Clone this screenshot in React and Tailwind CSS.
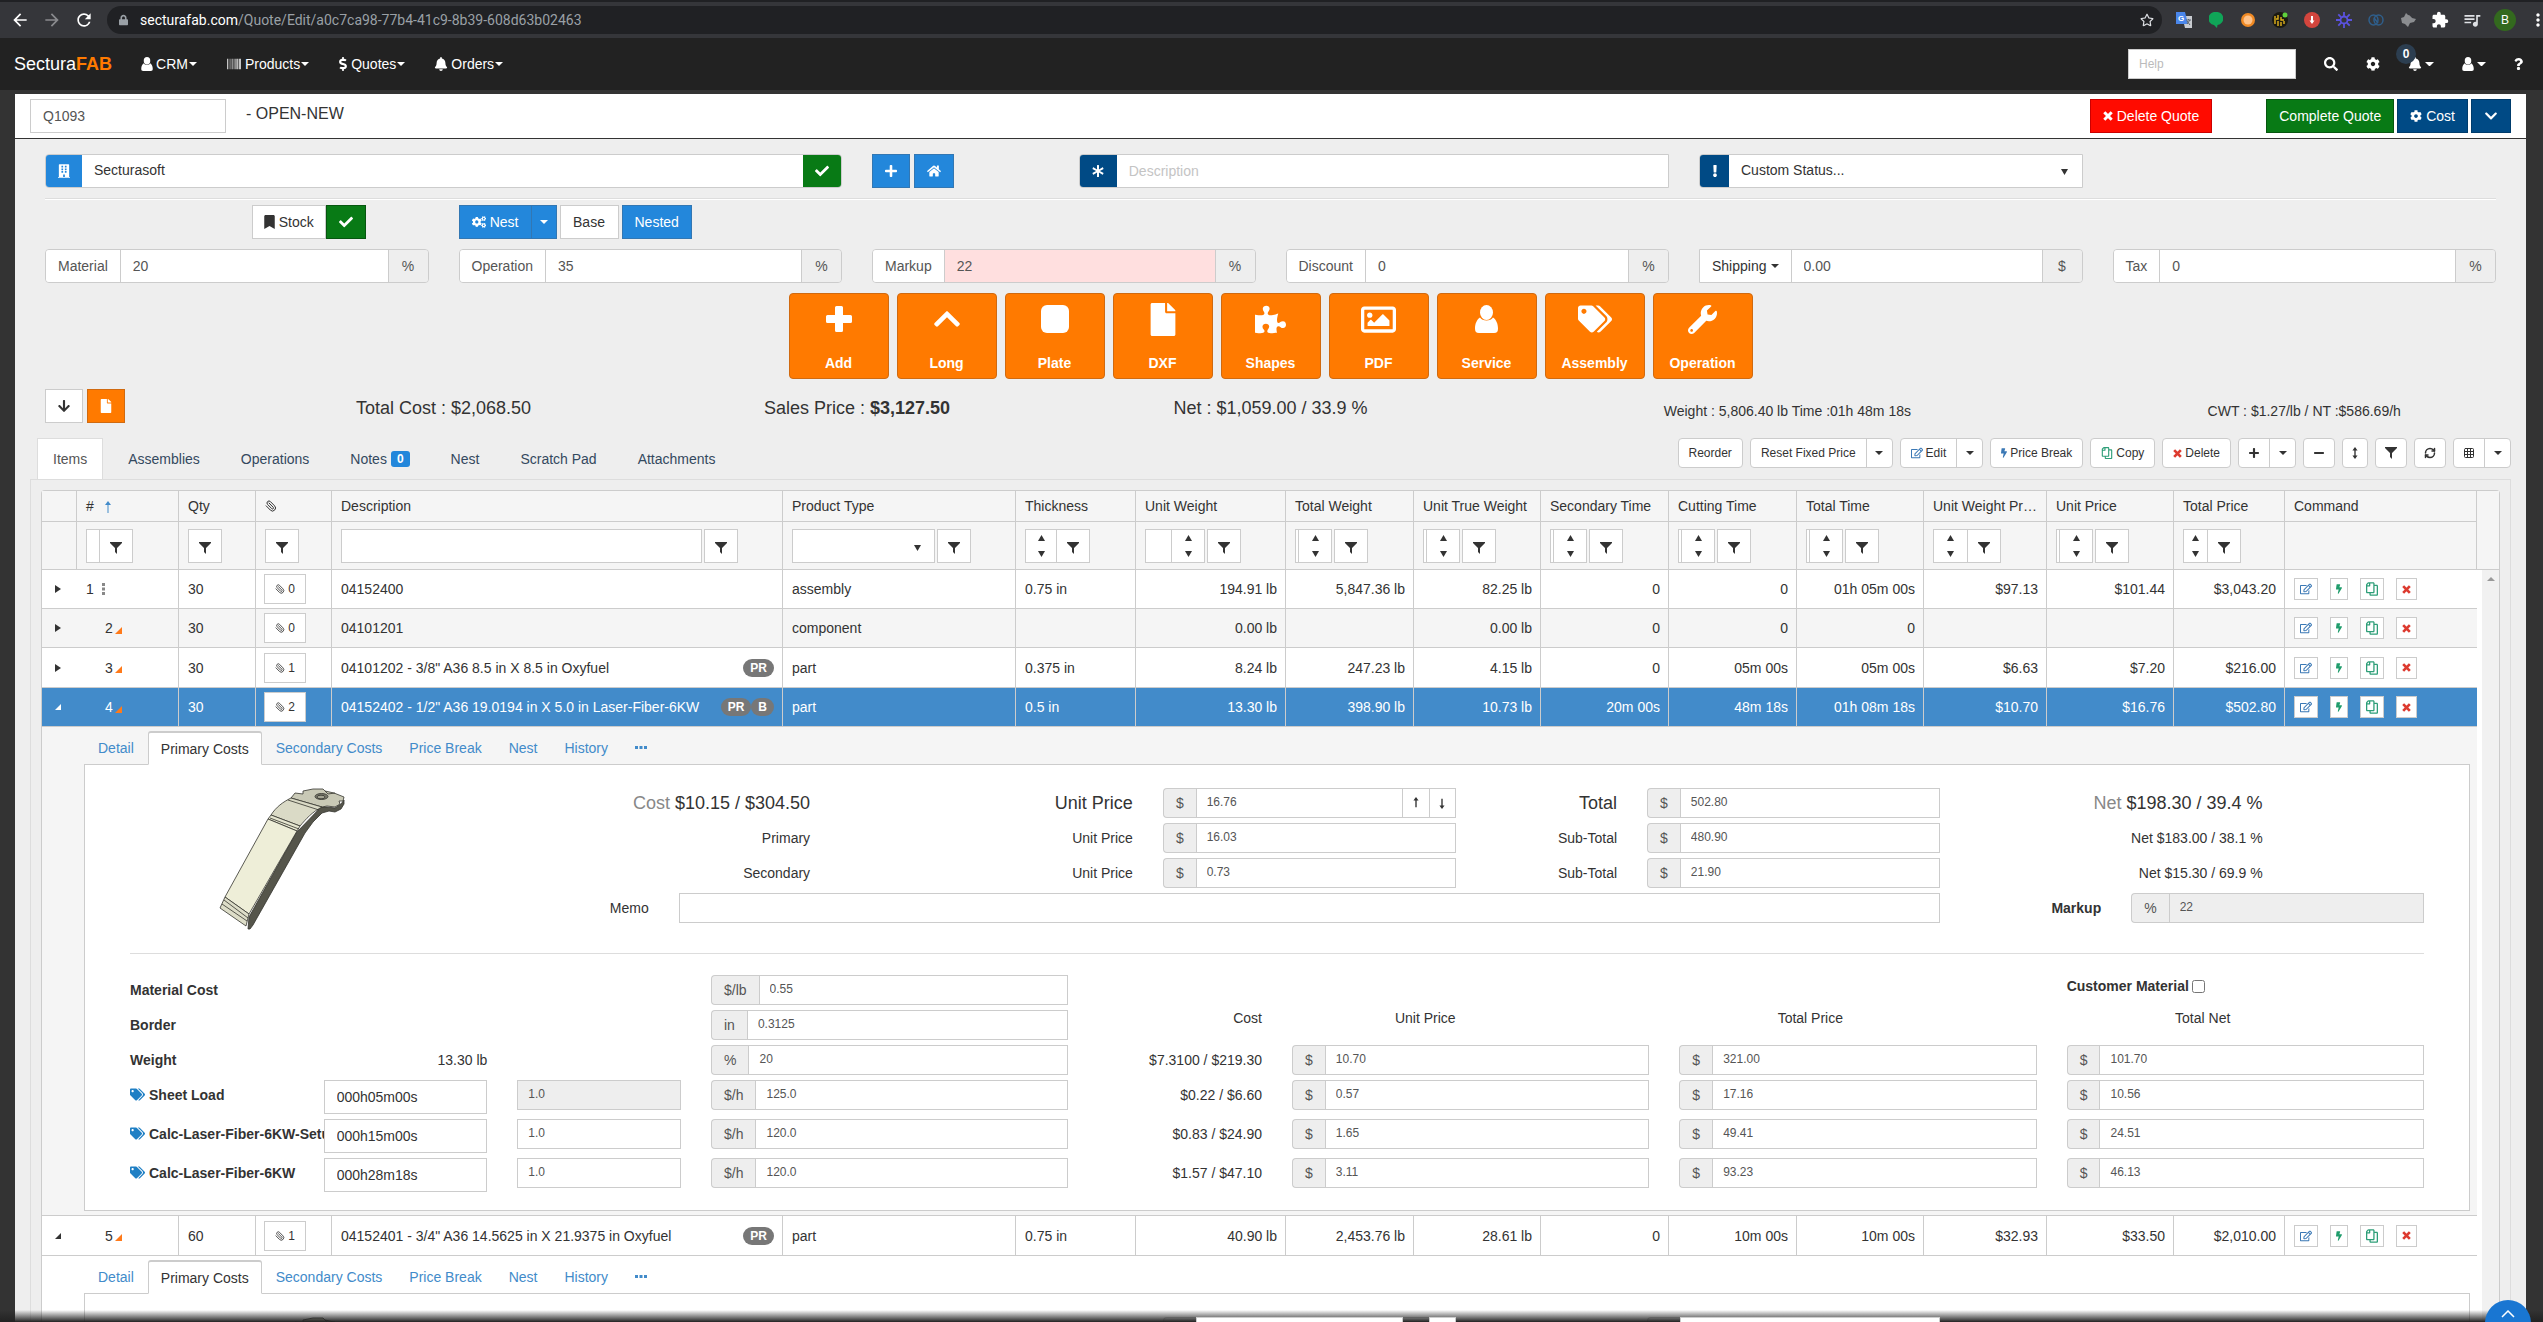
import { useState } from 'react';
import {
  FaArrowDown, FaAsterisk, FaBarcode, FaBell, FaBolt, FaBookmark, FaBuilding, FaCheck, FaChevronDown,
  FaChevronUp, FaCog, FaCogs, FaDollarSign, FaExclamation, FaFile, FaHome, FaLock, FaMinus,
  FaPlus, FaPuzzlePiece, FaQuestion, FaRegCopy, FaRegEdit, FaRegImage, FaRegStar, FaSearch, FaTags,
  FaWrench,
} from 'react-icons/fa';
import { MdArrowBack, MdArrowForward, MdExtension, MdMoreVert, MdQueueMusic, MdRefresh } from 'react-icons/md';
import { Grid3x3, Paperclip, RefreshCw } from 'lucide-react';
import clsx from 'clsx';

/* ---------- small icons ---------- */

function Caret({ className = 'w-2' }) {
  return (
    <svg viewBox="0 0 8 4" className={clsx('inline-block shrink-0', className)} fill="currentColor">
      <path d="M0 0h8L4 4z" />
    </svg>
  );
}

function Arrow({ className }) {
  return (
    <svg viewBox="0 0 7 6" className={clsx('block w-[7px] h-1.5', className)} fill="currentColor">
      <path d="M0 0h7L3.500 6z" />
    </svg>
  );
}

function Cross({ className }) {
  return (
    <svg viewBox="0 0 10 10" className={className} stroke="currentColor" strokeWidth="3">
      <path d="M1.300 1.300l7.400 7.400M8.700 1.300L1.300 8.700" />
    </svg>
  );
}

function Person({ className }) {
  return (
    <svg viewBox="0 0 23 28" className={className} fill="currentColor">
      <ellipse cx="11.500" cy="7.500" rx="6.500" ry="7.500" />
      <path d="M5 12.500c2 4 11 4 13 0 3 2 5 6 5 11 0 3-1 4.500-4 4.500H4c-3 0-4-1.500-4-4.500 0-5 2-9 5-11z" />
    </svg>
  );
}

function Funnel() {
  return (
    <svg viewBox="0 0 12 12" className="w-3 h-3" fill="currentColor">
      <path d="M0 0h12v1L7 6v6L5 10V6L0 1z" />
    </svg>
  );
}

function Vertical({ up, down }) {
  return (
    <svg viewBox="0 0 8 14" className="w-2 h-3" fill="currentColor">
      <path d="M3.200 2h1.600v10H3.200z" />
      {up && <path d="M4 0l3 4H1z" />}
      {down && <path d="M4 14l3-4H1z" />}
    </svg>
  );
}

function PartDrawing() {
  return (
    <svg viewBox="0 3 140 142" className="w-[140px] h-[142px]" stroke="#33332d" strokeWidth="0.8" strokeLinejoin="round">
      <path d="M107 22l6 0 8 1 6-4 3-4v4l-3 5-6 3-6-1-7 2-9 9-8 11-52 92-3 4-2 0 1-12 47-84z" fill="#55554b" />
      <path d="M77 13l4-5 8 1 0-3 10-2 10 0 2 2 9 2 10 4-1 4-4 0 1 3-5 3-8-1-5 1z" fill="#c9c9b6" />
      <path d="M77 13l31 9c-10 5-16 12-22 19L57 30c5-8 12-13 20-17z" fill="#dadac6" />
      <path d="M57 30l29 11-3 5-29-12z" fill="#e6e6d0" />
      <path d="M54 34l29 12-48 83-24-17z" fill="#eeeed8" />
      <path d="M11 112l24 17-3 12L6 123z" fill="#ddddc8" />
      <path d="M74 15l31 10M56 33l29 11M10 115l24 18M8 119l25 17M111 6l3 3 7-1" fill="none" />
      <ellipse cx="107.500" cy="11.500" rx="6.500" ry="3" fill="#77776a" />
      <ellipse cx="107" cy="12" rx="4" ry="1.800" fill="#a5a594" />
    </svg>
  );
}

/* ---------- browser bar + nav ---------- */

function Extensions() {
  return (
    <div className="flex items-center gap-3">
      <span className="flex w-5 justify-center">
        <svg viewBox="0 0 16 16" className="w-4 h-4">
          <path d="M6 4h10v12H9z" fill="#c9ccd1" />
          <path d="M0 0h9l3 12H0z" fill="#4a86ea" />
          <text x="2" y="9" fontSize="8" fontWeight="bold" fill="#fff" fontFamily="Liberation Sans, sans-serif">G</text>
          <path d="M10 8h5M12.500 7v1M11 12l3-4M11 9l3 4" stroke="#5b6470" strokeWidth="1" fill="none" />
        </svg>
      </span>
      <span className="flex w-5 justify-center">
        <svg viewBox="0 0 14 16" className="w-3.5 h-4"><path d="M7 0a6.500 6.500 0 0 1 1.500 13L8 16l-3-3A6.500 6.500 0 0 1 7 0z" fill="#10a558" /></svg>
      </span>
      <span className="flex w-5 justify-center">
        <svg viewBox="0 0 14 14" className="w-3.5 h-3.5"><circle cx="7" cy="7" r="7" fill="#f08a24" /><circle cx="7" cy="7" r="4.500" fill="#ffc38a" /></svg>
      </span>
      <span className="flex w-5 justify-center">
        <svg viewBox="0 0 16 16" className="w-4 h-4">
          <circle cx="8" cy="8" r="8" fill="#1b1a12" />
          <path d="M3 4v8M6 3v4H4M6 9v5M9 5v3h3M9 10v4M12 9v3" stroke="#e0b21b" strokeWidth="1.400" fill="none" />
          <circle cx="13" cy="3" r="2.500" fill="#5fd13c" />
        </svg>
      </span>
      <span className="flex w-5 justify-center">
        <svg viewBox="0 0 16 16" className="w-4 h-4"><circle cx="8" cy="8" r="8" fill="#d3453d" /><path d="M7 4h2v5H7zM5.500 8.500h5L8 12z" fill="#fff" /></svg>
      </span>
      <span className="flex w-5 justify-center">
        <svg viewBox="0 0 16 16" className="w-4 h-4" stroke="#5b52e0" strokeWidth="1.800">
          <circle cx="8" cy="8" r="3.500" fill="none" />
          <path d="M8 0v4M8 12v4M0 8h4M12 8h4M2.300 2.300l3 3M10.700 10.700l3 3M2.300 13.700l3-3M10.700 5.300l3-3" />
        </svg>
      </span>
      <span className="flex w-5 justify-center">
        <svg viewBox="0 0 16 12" className="w-4 h-3" fill="none" stroke="#2f5f8c" strokeWidth="1.500">
          <ellipse cx="5.500" cy="6" rx="4.500" ry="5" /><ellipse cx="10.500" cy="6" rx="4.500" ry="5" /><path d="M6 4l4 5" />
        </svg>
      </span>
      <span className="flex w-5 justify-center">
        <svg viewBox="0 0 16 14" className="w-4 h-3.5" fill="#8b8d90"><path d="M1 5l3-1 2-4 2 2c2 0 3 2 4 3l4 1-2 3-4 1-2 4-3-3-3-1z" /></svg>
      </span>
      <span className="flex w-5 justify-center"><MdExtension className="w-[18px] h-[18px] text-white" /></span>
      <span className="flex w-5 justify-center"><MdQueueMusic className="w-5 h-5 text-[#dfe1e5]" /></span>
      <span className="flex w-[22px] h-[22px] items-center justify-center rounded-full bg-[#33691e] text-xs text-white">B</span>
      <MdMoreVert className="-mr-3 w-5 h-5 text-white" />
    </div>
  );
}

function BrowserBar() {
  return (
    <div className="flex h-[38px] shrink-0 items-center border-t-2 border-[#202124] bg-[#35363a] pl-2.5 pr-[7px] text-white">
      <div className="flex w-[97px] items-center gap-3">
        <MdArrowBack className="w-5 h-5" />
        <MdArrowForward className="w-5 h-5 text-[#8a8b8e]" />
        <MdRefresh className="w-5 h-5" />
      </div>
      <div className="mr-3 flex h-7 flex-1 items-center rounded-full bg-[#202124] pl-3 pr-2">
        <FaLock className="w-[9px] text-[#9aa0a6]" />
        <span className="ml-3 flex-1 font-[Roboto,sans-serif] text-sm text-[#9aa0a6]">
          <span className="text-white">secturafab.com</span>/Quote/Edit/a0c7ca98-77b4-41c9-8b39-608d63b02463
        </span>
        <FaRegStar className="w-3.5 h-3.5 text-[#dfe1e5]" />
      </div>
      <Extensions />
    </div>
  );
}

function NavItem({ icon, label }) {
  return (
    <a href="#" className="flex items-center gap-[3px] text-white">
      {icon}
      <span className="flex items-center gap-px">{label}<Caret /></span>
    </a>
  );
}

function Navbar() {
  return (
    <nav className="flex h-[52px] shrink-0 items-center justify-between bg-[#222] pl-3.5 pr-5 text-white">
      <div className="flex items-center gap-[29px]">
        <a href="#" className="text-lg">Sectura<b className="text-[#ff7a00]">FAB</b></a>
        <NavItem icon={<Person className="w-3 h-3.5" />} label="CRM" />
        <NavItem icon={<FaBarcode className="w-4 h-3.5" />} label="Products" />
        <NavItem icon={<FaDollarSign className="w-2.5 h-3.5" />} label="Quotes" />
        <NavItem icon={<FaBell className="w-3.5 h-3.5" />} label="Orders" />
      </div>
      <div className="flex items-center gap-7">
        <input aria-label="Help" placeholder="Help" className="h-[30px] w-[168px] border border-[#ccc] bg-white px-2.5 text-xs placeholder:text-[#bbb]" />
        <button aria-label="Search"><FaSearch className="w-3.5 h-3.5" /></button>
        <button aria-label="Settings"><FaCog className="w-3.5 h-3.5" /></button>
        <button aria-label="Notifications" className="relative flex items-center gap-[3px]">
          <FaBell className="w-3.5 h-3.5" /><Caret className="w-[9px]" />
          <span className="absolute -left-3 -top-[13px] flex h-5 w-5 items-center justify-center rounded-full bg-[#2c3e50] text-xs font-bold">0</span>
        </button>
        <button aria-label="Account" className="flex items-center gap-[3px]"><Person className="w-3 h-3.5" /><Caret className="w-[9px]" /></button>
        <button aria-label="About"><FaQuestion className="w-[9px] h-3.5" /></button>
      </div>
    </nav>
  );
}

/* ---------- quote form ---------- */

const btn = 'inline-flex h-[34px] items-center justify-center gap-1 border px-3';
const blue = 'border-[#3277b3] bg-[#2387db] text-white';
const navy = 'border-[#003c6c] bg-[#004a85] text-white';
const green = 'border-[#06560f] bg-[#087a15] text-white';
const white = 'border-[#ccc] bg-white text-[#333]';

function QuoteHeader() {
  return (
    <div className="flex h-[45px] shrink-0 items-center justify-between border-b border-[#333] bg-white px-[15px]">
      <div className="flex items-center">
        <input aria-label="Quote number" defaultValue="Q1093" className="h-[34px] w-[196px] border border-[#ccc] px-3 text-[#555]" />
        <span className="ml-5 pb-1 text-base">- OPEN-NEW</span>
      </div>
      <div className="flex gap-[3px]">
        <button className={clsx(btn, 'mr-[51px] border-[#c00] bg-[#ff0b00] text-white')}><Cross className="w-2.5" />Delete Quote</button>
        <button className={clsx(btn, green)}>Complete Quote</button>
        <button className={clsx(btn, navy)}><FaCog className="w-3" />Cost</button>
        <button aria-label="More" className={clsx(btn, navy)}><FaChevronDown className="w-3.5" /></button>
      </div>
    </div>
  );
}

const rates = [
  { id: 'material', label: 'Material', value: '20', unit: '%' },
  { id: 'operation', label: 'Operation', value: '35', unit: '%' },
  { id: 'markup', label: 'Markup', value: '22', unit: '%', alert: true },
  { id: 'discount', label: 'Discount', value: '0', unit: '%' },
  { id: 'shipping', label: 'Shipping', value: '0.00', unit: '$', menu: true },
  { id: 'tax', label: 'Tax', value: '0', unit: '%' },
];

function RateField({ id, label, value, unit, alert, menu }) {
  return (
    <div className="px-[15px]">
      <div className={clsx('flex h-[34px] overflow-hidden border border-[#ccc] text-[#555]', menu ? 'rounded-r' : 'rounded')}>
        <label htmlFor={id} className={clsx('flex items-center gap-1 border-r border-[#ccc] bg-white px-3', menu && 'text-[#333]')}>
          {label}{menu && <Caret />}
        </label>
        <input id={id} defaultValue={value} className={clsx('min-w-0 flex-1 px-3', alert ? 'bg-[#ffdfdf]' : 'bg-white')} />
        <span className="flex w-10 items-center justify-center border-l border-[#ccc] bg-[#eee]">{unit}</span>
      </div>
    </div>
  );
}

const actions = [
  ['Add', <svg viewBox="0 0 26 26" className="w-[26px] h-[26px]" fill="currentColor"><path d="M9 1.500Q9 0 10.500 0h5Q17 0 17 1.500V9h7.500Q26 9 26 10.500v5Q26 17 24.500 17H17v7.500Q17 26 15.500 26h-5Q9 26 9 24.500V17H1.500Q0 17 0 15.500v-5Q0 9 1.500 9H9z" /></svg>],
  ['Long', <FaChevronUp className="w-[30px] h-[30px]" />],
  ['Plate', <span className="h-7 w-7 rounded-md bg-white" />],
  ['DXF', <FaFile className="w-[28px] h-[33px]" />],
  ['Shapes', <FaPuzzlePiece className="w-[31px] h-[31px]" />],
  ['PDF', <FaRegImage className="w-[35px] h-[35px]" />],
  ['Service', <Person className="w-[23px] h-7" />],
  ['Assembly', <FaTags className="w-[34px] h-[34px]" />],
  ['Operation', <FaWrench className="w-[29px] h-[29px]" />],
];

function QuoteForm() {
  return (
    <div className="mx-[15px] text-sm">
      <div className="grid grid-cols-12 pt-[15px]">
        <div className="col-span-4 px-[15px]">
          <div className="flex h-[34px] overflow-hidden rounded border border-[#ccc]">
            <label htmlFor="customer" className="flex w-9 items-center justify-center bg-[#2387db] text-white"><FaBuilding className="w-3" /></label>
            <input id="customer" defaultValue="Secturasoft" className="min-w-0 flex-1 bg-white px-3 pb-0.5" />
            <button aria-label="Confirm customer" className="flex w-[38px] items-center justify-center bg-[#087a15] text-white"><FaCheck className="w-3.5" /></button>
          </div>
        </div>
        <div className="flex gap-1 px-[15px]">
          <button aria-label="Add customer" className={clsx(btn, blue)}><FaPlus className="w-3" /></button>
          <button aria-label="Address" className={clsx(btn, blue)}><FaHome className="w-3.5" /></button>
        </div>
        <div className="col-span-3 px-[15px]">
          <div className="flex h-[34px] overflow-hidden rounded-l border border-[#ccc]">
            <label htmlFor="description" className="flex w-[37px] items-center justify-center bg-[#004a85] text-white"><FaAsterisk className="w-3" /></label>
            <input id="description" placeholder="Description" className="min-w-0 flex-1 bg-white px-3 placeholder:text-[#c4c4c4]" />
          </div>
        </div>
        <div className="col-span-2 px-[15px]">
          <div className="relative flex h-[34px] overflow-hidden rounded-l border border-[#ccc]">
            <label htmlFor="status" className="flex w-[29px] items-center justify-center bg-[#004a85] text-white"><FaExclamation className="h-3" /></label>
            <select id="status" className="min-w-0 flex-1 appearance-none bg-white px-3 pb-0.5"><option>Custom Status...</option></select>
            <Arrow className="absolute right-3.5 top-3.5" />
          </div>
        </div>
      </div>

      <hr className="mx-[15px] mt-2.5 h-0.5 border-t border-b border-t-[#ddd] border-b-white" />

      <div className="mt-[5px] grid grid-cols-12">
        <div className="col-start-2 flex px-[15px]">
          <button className={clsx(btn, white, 'px-[11px]')}><FaBookmark className="w-[11px]" />Stock</button>
          <button aria-label="In stock" className={clsx(btn, green)}><FaCheck className="w-3.5" /></button>
        </div>
        <div className="col-span-4 flex gap-[3px] px-[15px]">
          <div className="flex">
            <button className={clsx(btn, blue, 'w-[72px] border-r-0 px-0')}><FaCogs className="w-4" />Nest</button>
            <button aria-label="Nest options" className={clsx(btn, blue, 'w-[26px] px-0')}><Caret /></button>
          </div>
          <button className={clsx(btn, white, 'w-[59px] px-0')}>Base</button>
          <button className={clsx(btn, blue)}>Nested</button>
        </div>
      </div>

      <div className="mt-2.5 grid grid-cols-6">
        {rates.map((r) => <RateField key={r.id} {...r} />)}
      </div>

      <div className="mt-2.5 flex justify-center gap-2">
        {actions.map(([label, icon]) => (
          <button key={label} className="flex h-[86px] w-[100px] flex-col items-center rounded border border-[#d06a10] bg-[#ff7a00] pt-[7px] font-bold text-white">
            <span className="flex h-9 items-center">{icon}</span>
            <span className="mt-4">{label}</span>
          </button>
        ))}
      </div>

      <div className="mt-2.5 grid grid-cols-12 text-center text-lg">
        <div className="flex gap-1 pl-[15px] text-sm">
          <button aria-label="Expand" className={clsx(btn, white)}><FaArrowDown className="w-3" /></button>
          <button aria-label="Document" className={clsx(btn, 'border-[#d06a10] bg-[#ff7a00] text-white')}><FaFile className="w-3" /></button>
        </div>
        <div className="col-span-2 pt-[5px]">Total Cost : $2,068.50</div>
        <div className="col-span-2 pt-[5px]">Sales Price : <b>$3,127.50</b></div>
        <div className="col-span-2 pt-[5px]">Net : $1,059.00 / 33.9 %</div>
        <div className="col-span-3 pt-3 text-sm">Weight : 5,806.40 lb Time :01h 48m 18s</div>
        <div className="col-span-2 pt-3 text-sm">CWT : $1.27/lb / NT :$586.69/h</div>
      </div>
    </div>
  );
}

/* ---------- tabs + toolbar ---------- */

const tabs = ['Items', 'Assemblies', 'Operations', 'Notes', 'Nest', 'Scratch Pad', 'Attachments'];

function Tool({ children, menu, name, icon }) {
  return (
    <div className="flex h-[30px] rounded border border-[#ccc] bg-white text-xs">
      <button aria-label={name} className={clsx('flex items-center justify-center gap-[3px]', icon ? 'w-[30px]' : 'px-2.5')}>{children}</button>
      {menu && <button aria-label={name + ' menu'} className="flex w-[26px] items-center justify-center border-l border-[#ccc]"><Caret /></button>}
    </div>
  );
}

function TabStrip() {
  const [active, setActive] = useState('Items');
  return (
    <div className="mx-[15px] mt-[15px] flex shrink-0 justify-between">
      <div className="flex gap-[9px] pl-[7px]">
        {tabs.map((t) => (
          <button
            key={t}
            onClick={() => setActive(t)}
            className={clsx('flex h-[41px] items-center gap-1 border border-b-0 px-[15px]', t === active ? 'border-[#ddd] bg-white text-[#555]' : 'border-transparent text-[#34495e]')}
          >
            {t}
            {t === 'Notes' && <span className="rounded-[3px] bg-[#2387db] px-1.5 text-xs font-bold text-white">0</span>}
          </button>
        ))}
      </div>
      <div className="flex gap-[7px]">
        <Tool name="Reorder">Reorder</Tool>
        <Tool name="Reset Fixed Price" menu>Reset Fixed Price</Tool>
        <Tool name="Edit" menu><FaRegEdit className="w-3 text-[#3a78b5]" />Edit</Tool>
        <Tool name="Price Break"><FaBolt className="w-1.5 text-[#3a78b5]" />Price Break</Tool>
        <Tool name="Copy"><FaRegCopy className="w-3 -scale-x-100 text-[#2e9e78]" />Copy</Tool>
        <Tool name="Delete"><Cross className="w-[9px] text-[#dd3b30]" />Delete</Tool>
        <Tool name="Add row" icon menu><FaPlus className="w-2.5" /></Tool>
        <Tool name="Collapse" icon><FaMinus className="w-2.5" /></Tool>
        <Tool name="Row height"><span className="-mx-0.5"><Vertical up down /></span></Tool>
        <Tool name="Filter" icon><Funnel /></Tool>
        <Tool name="Refresh" icon><RefreshCw className="w-3 h-3" strokeWidth={3} /></Tool>
        <Tool name="Columns" icon menu><Grid3x3 className="w-3 h-3" /></Tool>
      </div>
    </div>
  );
}

/* ---------- items grid ---------- */

const columns = [
  { title: '', w: 'w-[35px]' },
  { title: '#', w: 'w-[102px]', filter: 'text', box: 'w-[13px]', sorted: true, joined: true },
  { title: 'Qty', w: 'w-[77px]', filter: 'none' },
  { title: 'clip', w: 'w-[76px]', filter: 'none' },
  { title: 'Description', w: '', filter: 'text', box: 'w-[361px]' },
  { title: 'Product Type', w: 'w-[233px]', filter: 'select' },
  { title: 'Thickness', w: 'w-[120px]', filter: 'spin', box: 'w-[31px]', joined: true },
  { title: 'Unit Weight', w: 'w-[150px]', filter: 'spin', box: 'w-[60px]' },
  { title: 'Total Weight', w: 'w-[128px]', filter: 'spin', box: 'w-[37px]' },
  { title: 'Unit True Weight', w: 'w-[127px]', filter: 'spin', box: 'w-[37px]' },
  { title: 'Secondary Time', w: 'w-[128px]', filter: 'spin', box: 'w-[37px]' },
  { title: 'Cutting Time', w: 'w-[128px]', filter: 'spin', box: 'w-[37px]' },
  { title: 'Total Time', w: 'w-[127px]', filter: 'spin', box: 'w-[37px]' },
  { title: 'Unit Weight Price', w: 'w-[123px]', filter: 'spin', box: 'w-[34px]', joined: true },
  { title: 'Unit Price', w: 'w-[127px]', filter: 'spin', box: 'w-[37px]' },
  { title: 'Total Price', w: 'w-[111px]', filter: 'spin', box: 'w-[24px]', joined: true },
  { title: 'Command', w: 'w-[192px]' },
];

function Cols() {
  return <colgroup>{columns.map((c) => <col key={c.title} className={c.w} />)}</colgroup>;
}

function Filter({ title, filter, box, joined }) {
  if (!filter) return null;
  return (
    <div className={clsx('flex', joined ? '' : 'gap-0.5')}>
      {filter === 'text' && <input aria-label={title + ' filter'} className={clsx('h-[34px] shrink-0 border border-[#ccc] bg-white', joined && 'border-r-0', box)} />}
      {filter === 'select' && (
        <span className="relative">
          <select aria-label={title + ' filter'} className="h-[34px] w-[143px] appearance-none border border-[#ccc] bg-white" />
          <Arrow className="absolute right-3.5 top-4" />
        </span>
      )}
      {filter === 'spin' && (
        <span className={clsx('flex h-[34px] shrink-0 justify-end overflow-hidden border border-[#ccc] bg-white', joined && 'border-r-0', box)}>
          <input aria-label={title + ' filter'} className="w-0 min-w-0 flex-1" />
          <span className={clsx('flex flex-col items-center justify-between border-[#ccc] py-[5px]', joined ? 'w-full' : 'w-[33px] shrink-0 border-l')}>
            <button aria-label="Increase" className="h-1.5"><Arrow className="rotate-180" /></button>
            <button aria-label="Decrease" className="h-1.5"><Arrow /></button>
          </span>
        </span>
      )}
      <button aria-label={'Filter ' + title} className="flex h-[34px] w-[34px] shrink-0 items-center justify-center border border-[#ccc] bg-white pt-1"><Funnel /></button>
    </div>
  );
}

function GridHead() {
  return (
    <div className="border-b border-[#ccc] bg-[#f5f5f5] pr-[22px]">
      <table className="w-full table-fixed border-separate border-spacing-0 text-left">
        <Cols />
        <thead>
          <tr className="h-[31px]">
            {columns.map((c, i) => (
              <th key={c.title} className={clsx('truncate border-b border-r border-[#ccc] font-normal', i > 0 && 'pl-[9px] pr-2')}>
                {c.title === 'clip' ? <Paperclip className="w-3 h-3 -scale-x-100" /> : c.title}
                {c.sorted && (
                  <svg viewBox="0 0 8 12" className="ml-2.5 inline w-2 h-3" fill="#428bca"><path d="M3.500 3h1v9h-1zM4 0l3 4H1z" /></svg>
                )}
              </th>
            ))}
          </tr>
          <tr className="h-[47px]">
            {columns.map((c, i) => (
              <td key={c.title} className={clsx('border-r border-[#ccc]', i > 0 && 'pl-[9px]')}><Filter {...c} /></td>
            ))}
          </tr>
        </thead>
      </table>
    </div>
  );
}

const items = [
  { no: 1, root: true, qty: 30, files: 0, desc: '04152400', type: 'assembly', cells: ['0.75 in', '194.91 lb', '5,847.36 lb', '82.25 lb', '0', '0', '01h 05m 00s', '$97.13', '$101.44', '$3,043.20'] },
  { no: 2, qty: 30, files: 0, desc: '04101201', type: 'component', cells: ['', '0.00 lb', '', '0.00 lb', '0', '0', '0', '', '', ''] },
  { no: 3, qty: 30, files: 1, desc: '04101202 - 3/8" A36 8.5 in X 8.5 in Oxyfuel', tags: ['PR'], type: 'part', cells: ['0.375 in', '8.24 lb', '247.23 lb', '4.15 lb', '0', '05m 00s', '05m 00s', '$6.63', '$7.20', '$216.00'] },
  { no: 4, qty: 30, files: 2, desc: '04152402 - 1/2" A36 19.0194 in X 5.0 in Laser-Fiber-6KW', tags: ['PR', 'B'], type: 'part', open: true, selected: true, cells: ['0.5 in', '13.30 lb', '398.90 lb', '10.73 lb', '20m 00s', '48m 18s', '01h 08m 18s', '$10.70', '$16.76', '$502.80'] },
  { no: 5, qty: 60, files: 1, desc: '04152401 - 3/4" A36 14.5625 in X 21.9375 in Oxyfuel', tags: ['PR'], type: 'part', open: true, cells: ['0.75 in', '40.90 lb', '2,453.76 lb', '28.61 lb', '0', '10m 00s', '10m 00s', '$32.93', '$33.50', '$2,010.00'] },
];

function Expander({ open }) {
  return (
    <svg viewBox="0 0 8 10" className="w-2 h-2.5" fill="currentColor">
      <path d={open ? 'M7 2v6H1z' : 'M1 1l6 4-6 4z'} />
    </svg>
  );
}

function ItemRow({ item }) {
  const cmd = 'flex h-[22px] items-center justify-center border border-[#ccc] bg-white';
  const cell = 'border-b border-r border-[#ccc]';
  return (
    <tr className={clsx(item.tags && !item.selected ? 'h-10' : 'h-[39px]', item.selected ? 'bg-[#428bca] text-white' : item.no === 2 ? 'bg-[#f5f5f5]' : 'bg-white')}>
      <td className="border-b border-[#ccc] pl-3"><button aria-label="Toggle detail" className="block"><Expander open={item.open} /></button></td>
      <td className={cell}>
        <span className={clsx('flex items-center', item.root ? 'gap-2 pl-[9px]' : 'gap-0.5 pl-7')}>
          {item.no}
          {item.root
            ? <svg viewBox="0 0 3 12" className="w-[3px] h-3" fill="#888"><path d="M0 0h3v3H0zM0 4.500h3v3H0zM0 9h3v3H0z" /></svg>
            : <svg viewBox="0 0 7 7" className="mt-1 w-[7px] h-[7px]" fill="#ff7a1a"><path d="M7 0v7H0z" /></svg>}
        </span>
      </td>
      <td className={clsx(cell, 'pl-[9px]')}>{item.qty}</td>
      <td className={clsx(cell, 'pl-2')}>
        <button aria-label="Attachments" className="flex h-[30px] w-[42px] items-center justify-center gap-[3px] border border-[#ccc] bg-white text-xs text-[#333]">
          <Paperclip className="w-2.5 h-2.5 -scale-x-100" />{item.files}
        </button>
      </td>
      <td className={clsx(cell, 'pl-[9px] pr-2')}>
        <div className="flex items-center justify-between whitespace-nowrap">
          {item.desc}
          <span className="flex">
            {item.tags?.map((t) => <span key={t} className="rounded-full bg-[#777] px-[7px] text-xs leading-[18px] font-bold text-white">{t}</span>)}
          </span>
        </div>
      </td>
      <td className={clsx(cell, 'pl-[9px]')}>{item.type}</td>
      {item.cells.map((c, i) => <td key={i} className={clsx(cell, i === 0 ? 'pl-[9px]' : 'pr-2 text-right')}>{c}</td>)}
      <td className="border-b border-[#ccc] pl-[9px]">
        <div className="flex gap-3">
          <button aria-label="Edit" className={clsx(cmd, 'w-6 text-[#3a78b5]')}><FaRegEdit className="w-3" /></button>
          <button aria-label="Price break" className={clsx(cmd, 'w-[18px] text-[#1f9d6c]')}><FaBolt className="w-1.5" /></button>
          <button aria-label="Copy" className={clsx(cmd, 'w-6 text-[#2e9e78]')}><FaRegCopy className="w-3 -scale-x-100" /></button>
          <button aria-label="Delete" className={clsx(cmd, 'w-[21px] text-[#dd3b30]')}><Cross className="w-[9px]" /></button>
        </div>
      </td>
    </tr>
  );
}

/* ---------- row detail ---------- */

function Field({ unit, value, label, disabled, steps }) {
  return (
    <div className="flex h-[30px] text-[#555]">
      {unit && <span className="flex items-center rounded-l border border-r-0 border-[#ccc] bg-[#eee] px-3">{unit}</span>}
      <input
        aria-label={label}
        defaultValue={value}
        disabled={disabled}
        className={clsx('min-w-0 flex-1 border border-[#ccc] px-2.5 pb-0.5 text-xs', disabled ? 'bg-[#eee]' : 'relative z-20 bg-white')}
      />
      {steps && (
        <>
          <button aria-label="Raise" className="flex w-[26px] items-center justify-center border-y border-[#ccc] bg-white text-[#333]"><Vertical up /></button>
          <button aria-label="Lower" className="relative z-20 flex w-[27px] items-center justify-center border border-[#ccc] bg-white text-[#333]"><Vertical down /></button>
        </>
      )}
    </div>
  );
}

function PriceSummary() {
  const rows = [
    { cost: 'Primary', unit: '16.03', total: '480.90', net: 'Net $183.00 / 38.1 %' },
    { cost: 'Secondary', unit: '0.73', total: '21.90', net: 'Net $15.30 / 69.9 %' },
  ];
  const row = 'grid grid-cols-12 items-center *:px-[15px]';
  return (
    <div className="col-span-10 flex flex-col gap-[5px] text-right">
      <div className={row}>
        <div className="col-span-2 text-lg"><span className="text-[#888]">Cost</span> $10.15 / $304.50</div>
        <div className="col-span-2 text-lg">Unit Price</div>
        <div className="col-span-2"><Field unit="$" value="16.76" label="Unit price" steps /></div>
        <div className="text-lg">Total</div>
        <div className="col-span-2"><Field unit="$" value="502.80" label="Total" /></div>
        <div className="col-span-2 text-lg"><span className="text-[#888]">Net</span> $198.30 / 39.4 %</div>
      </div>
      {rows.map((r) => (
        <div key={r.cost} className={row}>
          <div className="col-span-2">{r.cost}</div>
          <div className="col-span-2">Unit Price</div>
          <div className="col-span-2"><Field unit="$" value={r.unit} label={r.cost + ' unit price'} /></div>
          <div>Sub-Total</div>
          <div className="col-span-2"><Field unit="$" value={r.total} label={r.cost + ' sub-total'} /></div>
          <div className="col-span-2">{r.net}</div>
        </div>
      ))}
      <div className={row}>
        <div>Memo</div>
        <div className="col-span-8"><Field label="Memo" /></div>
        <div className="font-bold">Markup</div>
        <div className="col-span-2"><Field unit="%" value="22" label="Markup" disabled /></div>
      </div>
    </div>
  );
}

const costRows = [
  { name: 'Sheet Load', time: '000h05m00s', lock: true, rate: '125.0', cost: '$0.22 / $6.60', unit: '0.57', total: '17.16', net: '10.56' },
  { name: 'Calc-Laser-Fiber-6KW-Setup', time: '000h15m00s', rate: '120.0', cost: '$0.83 / $24.90', unit: '1.65', total: '49.41', net: '24.51' },
  { name: 'Calc-Laser-Fiber-6KW', time: '000h28m18s', rate: '120.0', cost: '$1.57 / $47.10', unit: '3.11', total: '93.23', net: '46.13' },
];

function CostTable({ id }) {
  const row = 'grid grid-cols-12 *:px-[15px]';
  const text = 'leading-[30px] whitespace-nowrap';
  return (
    <div className="mt-[21px] flex flex-col gap-[5px]">
      <div className={row}>
        <div className={clsx(text, 'col-span-3 font-bold')}>Material Cost</div>
        <div className="col-span-2"><Field unit="$/lb" value="0.55" label="Material cost" /></div>
        <div className="col-span-2 col-start-11 flex h-[22px] items-center gap-[3px]">
          <label htmlFor={id} className="font-bold">Customer Material</label>
          <input id={id} type="checkbox" className="h-[13px] w-[13px]" />
        </div>
      </div>
      <div className={row}>
        <div className={clsx(text, 'col-span-3 font-bold')}>Border</div>
        <div className="col-span-2"><Field unit="in" value="0.3125" label="Border" /></div>
        <div className="text-right leading-4">Cost</div>
        <div className="text-right leading-4">Unit Price</div>
        <div className="col-start-9 text-right leading-4">Total Price</div>
        <div className="col-start-11 text-right leading-4">Total Net</div>
      </div>
      <div className={row}>
        <div className={clsx(text, 'font-bold')}>Weight</div>
        <div className={clsx(text, 'text-right')}>13.30 lb</div>
        <div className="col-span-2 col-start-4"><Field unit="%" value="20" label="Weight percent" /></div>
        <div className={clsx(text, 'text-right')}>$7.3100 / $219.30</div>
        <div className="col-span-2"><Field unit="$" value="10.70" label="Unit price" /></div>
        <div className="col-span-2"><Field unit="$" value="321.00" label="Total price" /></div>
        <div className="col-span-2"><Field unit="$" value="101.70" label="Total net" /></div>
      </div>
      {costRows.map((r) => (
        <div key={r.name} className={row}>
          <div className={clsx(text, 'flex items-start gap-1 font-bold')}>
            <FaTags className="mt-[7px] w-[15px] h-[15px] shrink-0 text-[#1f7fc4]" />{r.name}
          </div>
          <div><input aria-label={r.name + ' time'} defaultValue={r.time} className="relative block h-[34px] w-full border border-[#ccc] bg-white px-3" /></div>
          <div><Field value="1.0" label={r.name + ' factor'} disabled={r.lock} /></div>
          <div className="col-span-2"><Field unit="$/h" value={r.rate} label={r.name + ' rate'} /></div>
          <div className={clsx(text, 'text-right')}>{r.cost}</div>
          <div className="col-span-2"><Field unit="$" value={r.unit} label={r.name + ' unit price'} /></div>
          <div className="col-span-2"><Field unit="$" value={r.total} label={r.name + ' total price'} /></div>
          <div className="col-span-2"><Field unit="$" value={r.net} label={r.name + ' total net'} /></div>
        </div>
      ))}
    </div>
  );
}

const detailTabs = ['Detail', 'Primary Costs', 'Secondary Costs', 'Price Break', 'Nest', 'History', 'More'];

function RowDetail({ item }) {
  return (
    <tr className={item.selected ? 'bg-[#f5f5f5]' : 'bg-white'}>
      <td colSpan={17} className="border-b border-[#ccc] pt-1 pr-[7px] pb-1 pl-[42px]">
        <div className="relative z-1 -mb-px flex gap-px pl-px">
          {detailTabs.map((t) => (
            <button
              key={t}
              aria-label={t}
              className={clsx('h-[34px] rounded-t-[3px] border px-3', t === 'Primary Costs' ? 'border-[#ccc] border-t-2 border-b-white bg-white text-[#333]' : 'border-transparent text-[#428bca]')}
            >
              {t === 'More'
                ? <svg viewBox="0 0 12 4" className="w-3 h-1" fill="currentColor"><path d="M0 0h3v3H0zM4.500 0h3v3h-3zM9 0h3v3H9z" /></svg>
                : t}
            </button>
          ))}
        </div>
        <div className="border border-[#ccc] bg-white px-[30px] pt-[23px] pb-[18px]">
          <div className="grid grid-cols-12">
            <div className="col-span-2 pl-[99px]"><PartDrawing /></div>
            <PriceSummary />
          </div>
          <hr className="mx-[15px] mt-[23px] border-[#ddd]" />
          <CostTable id={'customer-material-' + item.no} />
        </div>
      </td>
    </tr>
  );
}

function ItemsGrid() {
  return (
    <div className="mx-[15px] flex min-h-0 flex-1 flex-col border border-b-0 border-[#ddd] px-2.5 pt-2.5">
      <div className="flex min-h-0 flex-1 flex-col rounded-t border border-b-0 border-[#ccc]">
        <GridHead />
        <div className="flex min-h-0 flex-1 bg-white">
          <div className="flex-1 overflow-y-auto [scrollbar-width:none]">
            <table className="w-full table-fixed border-separate border-spacing-0">
              <Cols />
              <tbody>
                {items.map((item) => [
                  <ItemRow key={item.no} item={item} />,
                  item.open && <RowDetail key={item.no + 'd'} item={item} />,
                ])}
              </tbody>
            </table>
          </div>
          <div className="ml-[5px] flex w-[17px] justify-center bg-[#f1f1f1] pt-[7px] text-[#999]">
            <Caret className="h-1 w-2 rotate-180" />
          </div>
        </div>
      </div>
    </div>
  );
}

export default function App() {
  return (
    <div className="relative flex h-screen flex-col overflow-hidden bg-[#333] font-['Liberation_Sans',Arial,sans-serif] text-sm text-[#333]">
      <BrowserBar />
      <Navbar />
      <main className="mt-1 mr-[17px] ml-[15px] flex min-h-0 flex-1 flex-col bg-[#eee]">
        <QuoteHeader />
        <QuoteForm />
        <TabStrip />
        <ItemsGrid />
      </main>
      <div className="pointer-events-none absolute inset-x-0 bottom-0 z-10 h-3 bg-linear-to-b from-transparent to-[#222]" />
      <button aria-label="Scroll to top" className="absolute right-3 -bottom-6 z-30 flex h-[46px] w-[46px] justify-center rounded-full bg-[#1976d2] pt-2.5 text-white">
        <svg viewBox="0 0 14 8" className="w-3.5 h-2" fill="none" stroke="currentColor" strokeWidth="1.500"><path d="M1 7l6-6 6 6" /></svg>
      </button>
    </div>
  );
}
